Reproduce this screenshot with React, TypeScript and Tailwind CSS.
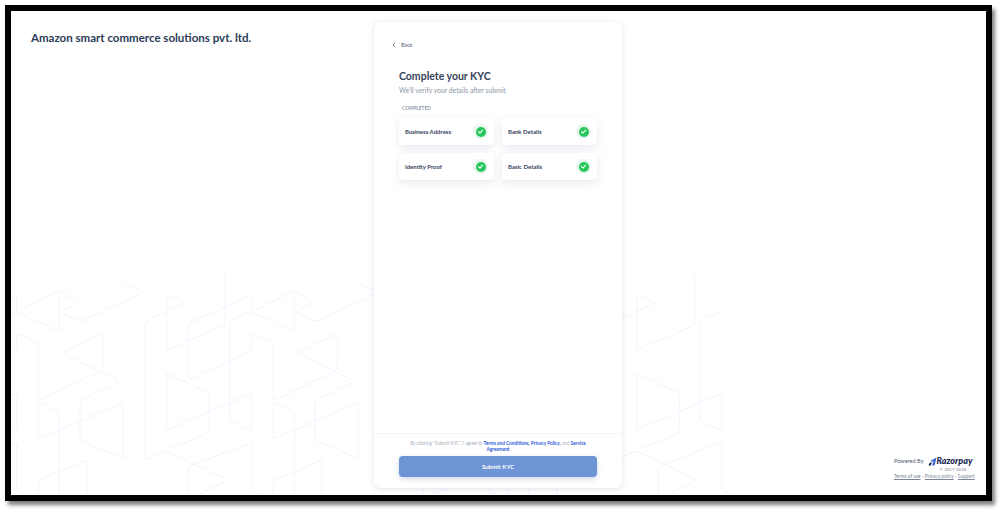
import React from "react";

type P = [number, number];
function rp(pts: P[], r = 9): string {
  let d = `M${pts[0][0]} ${pts[0][1]}`;
  for (let i = 1; i < pts.length; i++) {
    const c = pts[i];
    if (i === pts.length - 1) { d += `L${c[0]} ${c[1]}`; break; }
    const a = pts[i - 1], b = pts[i + 1];
    const la = Math.hypot(a[0] - c[0], a[1] - c[1]), lb = Math.hypot(b[0] - c[0], b[1] - c[1]);
    const ra = Math.min(r, la / 2), rb = Math.min(r, lb / 2);
    d += `L${c[0] + ((a[0] - c[0]) / la) * ra} ${c[1] + ((a[1] - c[1]) / la) * ra}Q${c[0]} ${c[1]} ${c[0] + ((b[0] - c[0]) / lb) * rb} ${c[1] + ((b[1] - c[1]) / lb) * rb}`;
  }
  return d;
}

const tile: P[][] = [
  [[178, 62], [50, 125], [178, 185], [178, 62], [235, 97], [180, 125], [240, 155], [430, 68], [370, 40]],
  [[43, 245], [50, 235], [50, 190], [115, 220], [115, 392], [303, 303], [308, 290], [308, 190], [187, 248], [360, 335], [240, 392], [240, 510], [370, 567], [370, 398], [115, 507], [115, 397], [178, 425], [178, 690]],
  [[115, 690], [115, 632], [260, 570], [260, 690]],
  [[555, 97], [500, 72], [500, 240], [675, 165], [675, 15]],
  [[555, 97], [435, 155], [435, 570], [500, 543], [683, 630], [600, 672]],
  [[565, 690], [565, 590], [755, 517], [755, 660], [790, 678]],
  [[43, 245], [-140, 330], [-140, 160], [50, 75], [50, 125]],
  [[500, 310], [628, 370], [628, 488], [515, 535]],
  [[500, 310], [500, 480], [755, 370], [755, 482], [690, 452], [690, 150], [755, 125]],
];

function Pattern() {
  const offsets = [-705, 0, 705, 1410];
  return (
    <svg className="absolute left-[-11px] top-[-11px] pointer-events-none" width="1005" height="506" viewBox="0 0 1005 506" fill="none">
      <defs>
        <linearGradient id="fade" x1="0" y1="285" x2="0" y2="495" gradientUnits="userSpaceOnUse">
          <stop offset="0" stopColor="#eef2fd" stopOpacity="0.15" />
          <stop offset="0.45" stopColor="#eef2fd" stopOpacity="0.75" />
          <stop offset="1" stopColor="#e9effd" stopOpacity="1" />
        </linearGradient>
        <clipPath id="cl"><rect x="11" y="11" width="975" height="484" /></clipPath>
      </defs>
      <g clipPath="url(#cl)">
        <g transform="translate(0 270) scale(0.3333)">
          {offsets.map((o) => (
            <g key={o} transform={`translate(${o} 0)`}>
              {tile.map((t, i) => (
                <path key={i} d={rp(t)} stroke="#e7edfc" strokeWidth="2.4" opacity={0.75} />
              ))}
            </g>
          ))}
        </g>
      </g>
    </svg>
  );
}

function Check() {
  return (
    <span className="flex h-[15px] w-[15px] items-center justify-center rounded-full bg-[#e9f6f0]">
      <span className="flex h-[10px] w-[10px] items-center justify-center rounded-full bg-[#27c65a]">
        <svg width="7" height="7" viewBox="0 0 10 10" fill="none">
          <path d="M2 5.2 4.2 7.4 8 3" stroke="#fff" strokeWidth="1.5" strokeLinecap="round" strokeLinejoin="round" />
        </svg>
      </span>
    </span>
  );
}

function Item({ label }: { label: string }) {
  return (
    <div className="flex h-[27px] items-center justify-between rounded-[4px] bg-white pl-[6px] pr-[6px] shadow-[0_3px_8px_rgba(60,80,120,0.12)]">
      <span className="text-[6px] font-bold text-[#34425c]">{label}</span>
      <Check />
    </div>
  );
}

export default function App() {
  return (
    <div className="h-[514px] w-[1005px] overflow-hidden bg-white pl-[5px] pt-[5px] font-['Lato',sans-serif]">
      <div className="h-[496px] w-[987px] border-[6px] border-black bg-white shadow-[3px_4px_4px_rgba(0,0,0,0.5)]">
        <div className="relative flex h-full w-full">
          <Pattern />
          <div className="relative w-[363px] pl-[20px] pt-[19px]">
            <h1 className="text-[11.5px] font-bold leading-[16px] text-[#2c3c58]">Amazon smart commerce solutions pvt. ltd.</h1>
          </div>

          <div className="relative mt-[11px] flex h-[466px] w-[248px] flex-col rounded-[7px] bg-white shadow-[0_1px_6px_rgba(70,90,130,0.16)]">
            <div className="flex h-[27px] items-end gap-[5px] pl-[18px] text-[5.5px] text-[#566279]">
              <svg width="4" height="6" viewBox="0 0 4 6" fill="none" className="mb-[1px]">
                <path d="M3 .8 1 3l2 2.2" stroke="#566279" strokeWidth="0.8" />
              </svg>
              <span className="leading-[8px]">Back</span>
            </div>
            <div className="flex-1 px-[25px]">
              <h2 className="mt-[20px] text-[10.5px] font-bold leading-[14px] text-[#34425c]">Complete your KYC</h2>
              <p className="mt-[2px] text-[6.8px] leading-[10px] text-[#8d97a8]">We'll verify your details after submit</p>
              <p className="mb-[6px] mt-[10px] pl-[3px] text-[4.8px] leading-[7px] text-[#6b778c]">COMPLETED</p>
              <div className="grid grid-cols-2 gap-x-[8px] gap-y-[8px]">
                <Item label="Business Address" />
                <Item label="Bank Details" />
                <Item label="Identity Proof" />
                <Item label="Basic Details" />
              </div>
            </div>
            <div className="border-t border-[#f3f4f7] px-[25px] pb-[11px] pt-[6px]">
              <p className="text-center text-[4.7px] leading-[6px] text-[#a8b0be]">
                By clicking "Submit KYC", I agree to <b className="text-[#2b5bd7]">Terms and Conditions, Privacy Policy,</b> and{" "}
                <b className="text-[#2b5bd7]">Service Agreement</b>
              </p>
              <button className="mt-[4px] block h-[21px] w-full rounded-[4px] bg-[#6d94d4] text-[6px] font-bold text-white shadow-[0_2px_5px_rgba(70,100,170,0.25)]">
                Submit KYC
              </button>
            </div>
          </div>

          <div className="relative flex flex-1 flex-col items-start justify-end pb-[15px] pl-[272px]">
            <div className="flex items-center gap-[3px] whitespace-nowrap">
              <span className="text-[5.6px] text-[#515e76]">Powered By</span>
              <svg width="9" height="9" viewBox="0 0 9 9" className="ml-[1px]">
                <path d="M3 3.4 8.6.6 6.4 8.6H4.2L5.6 3.8 3.6 5Z" fill="#2b62d9" />
                <path d="M1.6 6 3.8 5 2.9 8.6H.4Z" fill="#14274e" />
              </svg>
              <span className="ml-[-3px] text-[9px] font-black italic leading-[10px] text-[#14274e]">Razorpay</span>
            </div>
            <div className="w-[75px] pt-[1px] text-right text-[4.4px] leading-[6px] text-[#7c8698]">© 2017-2024 -</div>
            <div className="whitespace-nowrap text-[4.8px] leading-[7px] text-[#7c8698]">
              <span className="underline">Terms of use</span> - <span className="underline">Privacy policy</span> - <span className="underline">Support</span>
            </div>
          </div>
        </div>
      </div>
    </div>
  );
}
